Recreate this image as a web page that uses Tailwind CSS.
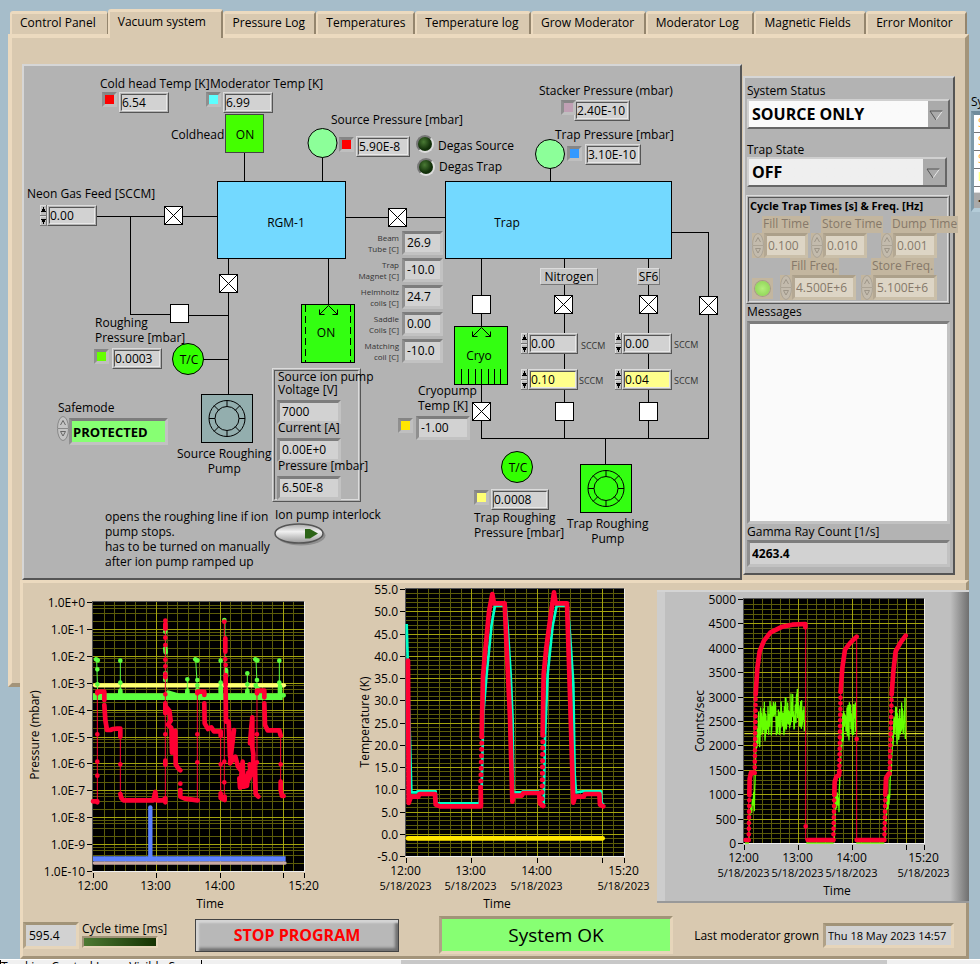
<!DOCTYPE html>
<html lang="en">
<head>
    <meta charset="UTF-8">
    <meta name="viewport" content="width=device-width, initial-scale=1.0">
    <title>Vacuum system</title>
    <script src="https://cdn.jsdelivr.net/npm/@tailwindcss/browser@4"></script>
</head>
<body class="bg-[#a6bdca] font-['Open_Sans','Noto_Sans',sans-serif] text-xs leading-[15px] text-black overflow-x-hidden">
    <div class="flex">
        <main class="flex-1 min-w-0 pl-2 pt-[9px]">
            <!-- Tabs -->
            <nav class="grid grid-cols-[98fr_115fr_94fr_99fr_116fr_115fr_109fr_112fr_101fr] items-end h-[25px] px-[2px]">
                <button class="h-[23px] pl-2 pb-[3px] text-left whitespace-nowrap rounded-t-[3px] border-t-[3px] border-l-2 border-r border-t-[#ecdabf] border-l-[#ecdabf] border-r-[#94856d] bg-[#d9c9b0]">Control Panel</button>
                <button class="relative h-[29px] -mb-[4px] pl-2 pb-[8px] text-left whitespace-nowrap rounded-t-[3px] border-t-[3px] border-l-2 border-r-2 border-t-[#ecdabf] border-l-[#ecdabf] border-r-[#94856d] bg-[#d9c9b0]">Vacuum system</button>
                <button class="h-[23px] pl-2 pb-[3px] text-left whitespace-nowrap rounded-t-[3px] border-t-[3px] border-l-2 border-r-2 border-t-[#ecdabf] border-l-[#ecdabf] border-r-[#94856d] bg-[#d9c9b0]">Pressure Log</button>
                <button class="h-[23px] pl-2 pb-[3px] text-left whitespace-nowrap rounded-t-[3px] border-t-[3px] border-l-2 border-r-2 border-t-[#ecdabf] border-l-[#ecdabf] border-r-[#94856d] bg-[#d9c9b0]">Temperatures</button>
                <button class="h-[23px] pl-2 pb-[3px] text-left whitespace-nowrap rounded-t-[3px] border-t-[3px] border-l-2 border-r-2 border-t-[#ecdabf] border-l-[#ecdabf] border-r-[#94856d] bg-[#d9c9b0]">Temperature log</button>
                <button class="h-[23px] pl-2 pb-[3px] text-left whitespace-nowrap rounded-t-[3px] border-t-[3px] border-l-2 border-r-2 border-t-[#ecdabf] border-l-[#ecdabf] border-r-[#94856d] bg-[#d9c9b0]">Grow Moderator</button>
                <button class="h-[23px] pl-2 pb-[3px] text-left whitespace-nowrap rounded-t-[3px] border-t-[3px] border-l-2 border-r-2 border-t-[#ecdabf] border-l-[#ecdabf] border-r-[#94856d] bg-[#d9c9b0]">Moderator Log</button>
                <button class="h-[23px] pl-2 pb-[3px] text-left whitespace-nowrap rounded-t-[3px] border-t-[3px] border-l-2 border-r-2 border-t-[#ecdabf] border-l-[#ecdabf] border-r-[#94856d] bg-[#d9c9b0]">Magnetic Fields</button>
                <button class="h-[23px] pl-2 pb-[3px] text-left whitespace-nowrap rounded-t-[3px] border-t-[3px] border-l-2 border-r-2 border-t-[#ecdabf] border-l-[#ecdabf] border-r-[#94856d] bg-[#d9c9b0]">Error Monitor</button>
            </nav>

            <!-- Tab page -->
            <section class="flex items-start border-4 border-t-[#ecdabf] border-l-[#ecdabf] border-r-[#a3947a] border-b-[#a3947a] bg-[#d9c9b0] pt-[26px] pl-[10px] pr-[10px] pb-[103px]">
                <!-- Synoptic diagram -->
                <div id="diagram" class="relative shrink-0 w-[720px] h-[516px] border-2 border-t-[#d6d6d6] border-l-[#d6d6d6] border-r-[#555] border-b-[#555] bg-[#b3b3b3]">
                    <svg class="absolute inset-0 text-xs" width="716" height="512" viewBox="24 66 716 512" fill="none" stroke="#000" stroke-width="1" shape-rendering="crispEdges">
                        <defs>
                            <g id="valve"><rect x="-9" y="-9" width="18" height="18" fill="#fff"/></g>
                            <g id="valveX"><rect x="-9" y="-9" width="18" height="18" fill="#fff"/><path d="M-9-9 9 9M9-9-9 9" shape-rendering="auto"/></g>
                            <g id="rotor" shape-rendering="auto"><circle r="18"/><circle r="12"/><path d="M0-18v6M0 12v6M-18 0h6M12 0h6M-13-13l5 5M13-13l-5 5M-13 13l5-5M13 13l-5-5"/></g>
                            <g id="inlet" shape-rendering="auto"><path d="M0 0-9 9M0 0 9 9M-9 4v5h5M9 4v5h-5"/></g>
                        </defs>
                        <!-- pipes -->
                        <path d="M244.5 153v28M322.5 157v24M97 216.5h120M130.5 216v98.5H170M189 315.5h39M228.5 259v135M203 359.5h25M328.5 259v45M346 217.5h99M550.5 168v14M481.5 258v180M564.5 258v180M648.5 258v180M672 232.5h36.5v206H481M605.5 438v26"/>
                        <!-- chambers -->
                        <rect x="217.5" y="181.5" width="128" height="77" fill="#73d9ff"/>
                        <rect x="445.5" y="181.5" width="226" height="77" fill="#73d9ff"/>
                        <rect x="225.5" y="114.5" width="38" height="38" fill="#4f0" stroke="#444"/>
                        <circle cx="322.5" cy="143" r="14.5" fill="#8cff99" shape-rendering="auto"/>
                        <circle cx="550" cy="154" r="14.5" fill="#8cff99" shape-rendering="auto"/>
                        <circle cx="188" cy="359" r="15.5" fill="#3f0" shape-rendering="auto"/>
                        <circle cx="517" cy="467" r="15.5" fill="#3f0" shape-rendering="auto"/>
                        <!-- valves -->
                        <use href="#valveX" x="173.5" y="215.5"/>
                        <use href="#valve" x="179.5" y="313.5"/>
                        <use href="#valveX" x="228.5" y="283.5"/>
                        <use href="#valveX" x="397.5" y="217.5"/>
                        <use href="#valve" x="481.5" y="304.5"/>
                        <use href="#valveX" x="563.5" y="304.5"/>
                        <use href="#valveX" x="648.5" y="304.5"/>
                        <use href="#valveX" x="708.5" y="305.5"/>
                        <use href="#valve" x="564.5" y="411.5"/>
                        <use href="#valve" x="648.5" y="411.5"/>
                        <!-- pumps -->
                        <rect x="201.5" y="394.5" width="51" height="48" fill="#93aeae"/>
                        <use href="#rotor" x="227" y="418.5"/>
                        <rect x="580.5" y="464.5" width="51" height="48" fill="#3f1"/>
                        <use href="#rotor" x="606" y="488.5"/>
                        <rect x="301.5" y="304.5" width="53" height="58" fill="#3f1"/>
                        <path d="M305.5 305v57M350.5 305v57" stroke-dasharray="7 4"/>
                        <use href="#inlet" x="328.5" y="305.5"/>
                        <rect x="454.5" y="326.5" width="53" height="58" fill="#3f1"/>
                        <use href="#inlet" x="481.5" y="327.5"/>
                        <path d="M461.5 369v15M468.5 369v15M475.5 369v15M481.5 369v15M488.5 369v15M494.5 369v15M500.5 369v15"/>
                        <use href="#valveX" x="481.5" y="411.5"/>
                        <g fill="#000" stroke="none" text-anchor="middle">
                            <text x="245" y="139">ON</text>
                            <text x="286" y="227">RGM-1</text>
                            <text x="507" y="227">Trap</text>
                            <text x="326" y="337">ON</text>
                            <text x="479" y="360">Cryo</text>
                            <text x="189" y="364">T/C</text>
                            <text x="518" y="472">T/C</text>
                        </g>
                    </svg>
                    <!-- ion pump cluster frame -->
                    <div class="absolute left-[248px] top-[302px] w-[89px] h-[134px] border border-t-[#dcdcdc] border-l-[#dcdcdc] border-r-[#555] border-b-[#555] p-px">
                        <div class="h-full border border-t-[#555] border-l-[#555] border-r-[#dcdcdc] border-b-[#dcdcdc]"></div>
                    </div>
                    <!-- ion pump interlock switch -->
                    <button id="interlock" class="absolute left-[250px] top-[457px] w-[52px] h-[23px]">
                        <svg width="52" height="23" viewBox="0 0 52 23">
                            <defs><linearGradient id="sw" x1="0" y1="0" x2="0" y2="1"><stop offset="0" stop-color="#aaa"/><stop offset=".4" stop-color="#f0f0f0"/><stop offset="1" stop-color="#999"/></linearGradient></defs>
                            <ellipse cx="27" cy="12.5" rx="24.5" ry="10" fill="#777" opacity=".6"/>
                            <ellipse cx="25" cy="10.5" rx="24" ry="9.5" fill="url(#sw)" stroke="#555" stroke-width="1.5"/>
                            <path d="M31 6h5l8 4.5-8 5h-5z" fill="#2c6417"/>
                        </svg>
                    </button>
                    <!-- safemode -->
                    <label for="safemode" class="absolute left-[34px] top-[334px]">Safemode</label>
                    <svg class="absolute left-[33px] top-[350px]" width="12" height="25" viewBox="0 0 12 25"><use href="#oval"/></svg>
                    <input id="safemode" readonly value="PROTECTED" class="absolute left-[45px] top-[352px] w-[99px] h-[27px] pl-px border-[3px] border-t-[#7d7d7d] border-l-[#8f8f8f] border-r-[#c2c2c2] border-b-[#c2c2c2] bg-[#87ff73] text-[13px] font-bold outline-none">
                </div>

                <!-- Status column -->
                <div class="flex-1 min-w-0 mt-3 ml-px h-[499px] border-2 border-t-[#d6d6d6] border-l-[#d6d6d6] border-r-[#555] border-b-[#555] bg-[#b3b3b3] pl-[2px] pr-[3px] pt-[5px]">
                    <label for="status" class="block">System Status</label>
                    <div class="relative mt-px h-[30px] border-2 border-t-[#d0d0d0] border-l-[#d0d0d0] border-r-[#666] border-b-[#666] bg-[#aaa]">
                        <select id="status" class="appearance-none absolute inset-0 w-full pl-[3px] bg-linear-to-r from-[#fafafa] from-90% to-transparent to-90% text-base font-bold outline-none"><option>SOURCE ONLY</option><option>OFF</option></select>
                        <svg class="absolute right-[5px] top-[9px] pointer-events-none" width="14" height="11" viewBox="0 0 14 11"><path d="M13.5 1 7 10" stroke="#e8e8e8" fill="none"/><path d="M13.5 1H1l6 9" stroke="#555" fill="none"/></svg>
                    </div>
                    <label for="trapState" class="block mt-[13px]">Trap State</label>
                    <div class="relative mr-[3px] h-[30px] border-2 border-t-[#d0d0d0] border-l-[#d0d0d0] border-r-[#666] border-b-[#666] bg-[#aaa]">
                        <select id="trapState" class="appearance-none absolute inset-0 w-full pl-[3px] bg-linear-to-r from-[#efefef] from-89% to-transparent to-89% text-base font-bold outline-none"><option>OFF</option><option>ON</option></select>
                        <svg class="absolute right-[5px] top-[9px] pointer-events-none" width="14" height="11" viewBox="0 0 14 11"><path d="M13.5 1 7 10" stroke="#e8e8e8" fill="none"/><path d="M13.5 1H1l6 9" stroke="#555" fill="none"/></svg>
                    </div>
                    <!-- Cycle trap times, disabled -->
                    <fieldset class="mt-[8px] -ml-px h-[109px] border border-t-[#dcdcdc] border-l-[#dcdcdc] border-r-[#555] border-b-[#555] p-px">
                        <div class="h-full border border-t-[#555] border-l-[#555] border-r-[#dcdcdc] border-b-[#dcdcdc]">
                            <div class="pl-px text-[11px] font-bold whitespace-nowrap">Cycle Trap Times [s] &amp; Freq. [Hz]</div>
                            <div id="cycleTimes" class="flex pl-[3px] mt-[3px]"></div>
                            <div class="flex items-end pl-[3px]">
                                <div class="w-[21px] h-[21px] mr-[7px] mb-px bg-[#c3b69f] p-[3px]"><div class="size-[15px] rounded-full bg-radial from-[#b4ee7c] to-[#86d04e] ring-1 ring-[#a89c86]"></div></div>
                                <div id="cycleFreqs" class="flex"></div>
                            </div>
                        </div>
                    </fieldset>
                    <label for="messages" class="block">Messages</label>
                    <textarea id="messages" readonly class="block mt-[2px] w-full h-[203px] resize-none border-[3px] border-t-[#7d7d7d] border-l-[#8f8f8f] border-r-[#c2c2c2] border-b-[#c2c2c2] bg-[#fafafa] outline-none"></textarea>
                    <label for="gamma" class="block">Gamma Ray Count [1/s]</label>
                    <input id="gamma" readonly value="4263.4" class="block mt-px w-full h-[27px] pl-[2px] pb-px border-[3px] border-t-[#7d7d7d] border-l-[#8f8f8f] border-r-[#c2c2c2] border-b-[#c2c2c2] bg-[#d2d2d2] font-bold outline-none">
                </div>
            </section>

            <!-- Trends and program control -->
            <section class="relative ml-3 -mt-[107px] h-[379px] border-[3px] border-t-[#ecdabf] border-l-[#ecdabf] border-r-[#a3947a] border-b-[#a3947a] bg-[#d9c9b0]">
                <div class="flex items-start">
                    <svg id="pressureChart" class="shrink-0" width="300" height="330" viewBox="23 3 300 330">
                        <g id="pressureGrid"></g>
                        <g transform="scale(.33333)" fill="none" stroke-linecap="round" stroke-linejoin="round">
                            <path stroke="#c9a9a3" stroke-width="10" d="M283 849H855"/>
                            <path stroke="#5c82ff" stroke-width="15" stroke-linecap="butt" d="M279 836H857M496 832v4M592 832v4M657 832v4M720 832v4M849 832v4"/>
                            <path stroke="#5c82ff" stroke-width="13" d="M451 834V682"/>
                            <path stroke="#ffff73" stroke-width="13" d="M285 316H852"/>
                            <path stroke="#5cff40" stroke-width="20" stroke-linecap="butt" d="M279 350H848"/>
                            <path stroke="#5cff40" stroke-width="14" d="M361 332v10M505 338l25 8M562 332v8M592 330v8M662 322v16M742 332v8M772 325v10M840 320v20M850 346h1"/>
                            <path stroke="#5cff40" stroke-width="3" d="M290 238l3 100M361 242V340M497 120V340M562 298V340M587 238l6 102M662 242V340M675 120V340M742 280V340M768 238l4 100M838 242V340"/>
                            <path stroke="#5cff40" stroke-width="14" d="M288 238l5 3M292 268h0M292 313h0M361 242h0M361 308h0M496 155h0M496 205l1 12M496 280v20M562 298h0M586 238l6 3M592 300h0M592 316h0M662 242h0M662 308h0M673 120h0M678 270v20M742 280h0M742 313h0M766 238l6 3M771 300h0M767 316h0M838 242h0M838 308h0"/>
                            <path stroke="#f03" stroke-width="3" d="M292 665V337M361 455V650M496 660V120M592 660V337M662 455V650M673 657V125M771 650V332M842 455V650"/>
                            <path stroke="#f03" stroke-width="14" d="M279 664h13v3M292 340v-5h21v25M292 463h0M292 545h0M292 587h0M313 375l3 45 5 30h10l8-3 12-1h10v24M361 553h0M361 642l3 12 6 7H460l6-25 3 25h20l7-6v12"/>
                            <path stroke="#f03" stroke-width="14" d="M496 122h0M496 132v14M496 173h0M496 195h0M496 239h0M496 259h0M496 282v10M496 343h0M496 370v30M496 463h0M496 542v12M498 380l10 12 4 30-8 12 10 10 2 74 6-20-4-40 8-5 1 100 8 12 6 6M541 611h0M541 630v20l14 6 38 5"/>
                            <path stroke="#f03" stroke-width="14" d="M592 463h0M592 547h0M592 340v-5h21v10M613 370l1 60 10 17 10-5 8 12h20v14M662 553h0M662 640v14l12 6v-10M673 607h0M673 545h0M673 125h0M676 175v40M676 238h0M677 255h0M677 285v30M677 325l1 100 8 0 4 105 12-80-12 100 16-20 8 30 8 10M718 595l2 28 8-78 3 75 10-3 4-40-6 36 14-30-4-30 8 8M750 490l4-50 3-28v90l3 20-1 60 4-30 4 90 8 8M771 547h0M771 463h0M771 340v-8h22v20M793 370l2 65 8 16h35l4 16M842 553h0M842 605v25l4 18h5"/>
                        </g>
                    </svg>
                    <svg id="tempChart" class="shrink-0 ml-[27px]" width="305" height="330" viewBox="10 9 305 330">
                        <g id="tempGrid"></g>
                        <g transform="scale(.33333)" fill="none" stroke-linejoin="round">
                            <path stroke="#ffe600" stroke-width="14" stroke-linecap="round" d="M204 793H788"/>
                            <path stroke="#00ffc8" stroke-width="8" d="M200 150l10 350 4 155h15l4-3h54l2 36H418l7-48 5-220 10-120 15-150 10-55h32l6 65 9 140 6 140 2 215h25l3-3h47l4 38h12l4-200 8-190 15-145 12-60h33l7 85 10 150 4 270 4 55 20-3h55l2 34 6 6"/>
                            <path stroke="#f03" stroke-width="14" stroke-linecap="round" d="M204 260l2 427 7-19h22l3-8h47l2 32 13 5H423l-1-57M425 488l4-180 6-70 12-125 10-53 5 28h32l5 112 11 230 7 253 4-18h24l5-8h47l3 32 10 7M608 480l3-180 8-80 15-110 8-55 5 33h34l7 212 8 260 4 126 5-18h26l4-8h43l2 32 10 5"/>
                            <path stroke="#f03" stroke-width="15" stroke-linecap="round" stroke-dasharray="0 19" d="M422 640L426 480M606 693L609 470"/>
                        </g>
                    </svg>
                    <!-- count rate -->
                    <div class="w-[312px] shrink-0 ml-auto -mr-[3px] mt-[7px] h-[313px] border-t-2 border-t-[#d4d4d4] border-b-2 border-b-[#999] bg-[#bfbfbf]">
                        <div class="h-full bg-linear-to-r from-transparent from-94% to-[#6f6f6f]">
                            <div class="h-full border-l-8 border-l-[#cdcdcd]">
                                <svg id="countChart" width="300" height="309" viewBox="26 84 300 309">
                                    <g id="countGrid"></g>
                                    <g transform="scale(.33333)" fill="none" stroke-linejoin="round">
                                        <path stroke="#6f0" stroke-width="4" d="M318 1005h12M502 1005h82M652 1005h84"/>
                                        <path stroke="#ff3" stroke-width="3" d="M316 677H855"/>
                                        <path id="gammaNoise" stroke="#6f0" stroke-width="4"/>
                                        <path stroke="#f03" stroke-width="3" d="M329 996V870M347 795V560M500 355V996M584 996v-130M601 795l4-240M653 390V996M736 996V860M752 795l6-235"/>
                                        <path stroke="#f03" stroke-width="14" stroke-linecap="round" d="M320 996h8M331 862l1-50 4-18h10M350 560l5-80 7-50 13-32 20-25 35-17 30-6 39-2v10M500 955h0M506 996h77M586 860l1-38 5-16 8-4 1-14M605 550l5-70 8-55 17-22 18-17M653 693h0M653 996h82M739 855l2-45 8-13M758 560l5-70 7-60 15-27 15-20"/>
                                        <path stroke="#f03" stroke-width="14" stroke-linecap="round" stroke-dasharray="0 17" d="M329 996l2-130M347 795l3-235M583 996l3-136M601 790l4-240M736 996l3-140M752 797l6-235"/>
                                    </g>
                                </svg>
                            </div>
                        </div>
                    </div>
                </div>

                <div class="flex items-center h-[38px] mt-[3px] pr-[12px]">
                    <input aria-label="Cycle time" readonly value="595.4" class="w-[56px] h-[27px] pl-[3px] border-[3px] border-t-[#a19378] border-l-[#b0a187] border-r-[#e6d5ba] border-b-[#e6d5ba] bg-[#d2d2d2] outline-none">
                    <div class="ml-[3px] w-[83px]">
                        <span class="whitespace-nowrap">Cycle time [ms]</span>
                        <div class="w-[76px] h-[12px] mb-px border-2 border-t-[#a19378] border-l-[#a19378] border-r-[#e6d5ba] border-b-[#e6d5ba] bg-linear-to-r from-[#4d7a33] to-[#153303]"></div>
                    </div>
                    <button class="ml-[30px] w-[204px] h-[33px] border border-[#444] bg-[#b8b8b8] shadow-[inset_3px_3px_2px_#d4d4d4,inset_-3px_-3px_3px_#707070] text-base font-bold text-[#f00]">STOP PROGRAM</button>
                    <div class="ml-[40px] w-[234px] h-[38px] flex items-center justify-center border-[3px] border-t-[#a19378] border-l-[#b0a187] border-r-[#e6d5ba] border-b-[#e6d5ba] bg-[#87ff73] text-[19px]">System OK</div>
                    <label for="lastGrown" class="ml-auto whitespace-nowrap">Last moderator grown</label>
                    <input id="lastGrown" readonly value="Thu 18 May 2023 14:57" class="ml-[4px] w-[131px] h-[25px] pl-[2px] border-[3px] border-t-[#a19378] border-l-[#b0a187] border-r-[#e6d5ba] border-b-[#e6d5ba] bg-[#d2d2d2] text-[11px] outline-none">
                </div>
            </section>
        </main>

        <!-- Neighbouring table, mostly scrolled out of view -->
        <aside class="w-[11px] shrink-0 overflow-hidden pt-[94px] pl-[2px]">
            <div class="whitespace-nowrap">Sys</div>
            <div class="mt-[2px] h-[101px] w-10 border-t-4 border-l-[3px] border-b-4 border-t-[#6f8b9b] border-l-[#7f9aa9] border-b-[#b4ccd8] bg-white">
                <div class="h-[18px] border-b border-[#777] text-[#ffa940] pl-1">S</div>
                <div class="h-[18px] border-b border-[#777] text-[#ffa940] pl-1">S</div>
                <div class="h-[18px] border-b border-[#777] text-[#ffa940] pl-1">S</div>
                <div class="h-[18px] border-b border-[#777] text-[#ffff66] pl-1">L</div>
                <div class="h-[5px]"></div>
                <div class="h-[16px] bg-[#aaa] border-t border-[#ddd] pl-1 leading-[14px]">◂</div>
            </div>
        </aside>
    </div>

    <!-- Window bottom edge -->
    <footer class="flex h-[5px] overflow-hidden border-t border-white bg-[#f0f0f0]">
        <div class="w-[202px] h-[20px] -mt-px border border-black bg-[#f0f0f0] leading-[14px] whitespace-nowrap overflow-hidden">Tracking Control Laser Visible Scan</div>
        <div class="flex-1"></div>
        <div class="w-[486px] bg-[#c8c8c8]"></div>
        <div class="w-[93px]"></div>
    </footer>

    <svg width="0" height="0" class="absolute">
        <g id="oval"><ellipse cx="6" cy="12.5" rx="5.5" ry="12" fill="#c4c4c4" stroke="#888"/><path d="M1 12.500h10" stroke="#888"/><path d="M3.500 9 6 4.500 8.500 9M3.500 15.500h5L6 20z" fill="none" stroke="#666"/></g>
    </svg>

    <script>
        const diagram = document.getElementById('diagram');

        // id, value, left, top, width, style
        const fields = [
            ['coldTemp', '6.54', 95, 26, 50, 'flat'],
            ['modTemp', '6.99', 199, 26, 50, 'flat'],
            ['sourceP', '5.90E-8', 332, 70, 54, 'flat'],
            ['stackerP', '2.40E-10', 550, 34, 56, 'flat'],
            ['trapP', '3.10E-10', 561, 78, 56, 'flat'],
            ['neon', '0.00', 23, 139, 50, 'flat', true],
            ['roughP', '0.0003', 88, 282, 50, 'flat'],
            ['n2Read', '0.00', 504, 267, 50, 'flat', true],
            ['n2Set', '0.10', 504, 303, 50, 'yellow', true],
            ['sfRead', '0.00', 598, 267, 50, 'flat', true],
            ['sfSet', '0.04', 598, 303, 50, 'yellow', true],
            ['trapRoughP', '0.0008', 467, 423, 58, 'flat'],
            ['t0', '26.9', 378, 165, 41, 'deep'],
            ['t1', '-10.0', 378, 192, 41, 'deep'],
            ['t2', '24.7', 378, 219, 41, 'deep'],
            ['t3', '0.00', 378, 246, 41, 'deep'],
            ['t4', '-10.0', 378, 273, 41, 'deep'],
            ['cryoTemp', '-1.00', 392, 350, 54, 'deep'],
            ['ionV', '7000', 253, 334, 64, 'deep'],
            ['ionA', '0.00E+0', 253, 372, 64, 'deep'],
            ['ionP', '6.50E-8', 253, 410, 64, 'deep'],
        ];
        const frame = 'absolute h-[21px] border border-t-[#dcdcdc] border-l-[#dcdcdc] border-r-[#555] border-b-[#555] p-px bg-[#b3b3b3]';
        const inner = 'block w-full h-full pb-px border border-t-[#555] border-l-[#555] border-r-[#e8e8e8] border-b-[#e8e8e8] outline-none ';
        const deep = 'absolute h-[24px] pl-[2px] pb-[2px] border-[3px] border-t-[#7d7d7d] border-l-[#8f8f8f] border-r-[#c2c2c2] border-b-[#c2c2c2] bg-[#d2d2d2] outline-none';
        for (const [id, value, x, y, w, kind, spin] of fields) {
            const pos = `left:${x}px;top:${y}px;width:${w}px`;
            const html = kind === 'deep'
                ? `<input id="${id}" readonly value="${value}" class="${deep}" style="${pos}">`
                : `<div class="${frame}" style="${pos}"><input id="${id}" ${spin ? '' : 'readonly'} value="${value}" class="${inner + (kind === 'yellow' ? 'bg-[#ffff8c]' : 'bg-[#d2d2d2]')}"></div>`;
            diagram.insertAdjacentHTML('beforeend', html);
            if (spin) {
                diagram.insertAdjacentHTML('beforeend', `<svg class="absolute" style="left:${x - 7}px;top:${y}px" width="7" height="21" viewBox="0 0 7 21" shape-rendering="crispEdges">
                    <path d="M0 0h7v10H0zM0 11h7v10H0z" fill="#bdbdbd"/><path d="M.5 10V.5H6M.5 20v-9H6" stroke="#dcdcdc" fill="none"/><path d="M6.5 0v10H0M6.5 11v9.5H0" stroke="#777" fill="none"/>
                    <path d="M3.5 2 6 7H1zM3.5 19 6 14H1z" fill="#000"/></svg>`);
            }
        }

        // text, left, top, extra classes, id of the field it names
        const labels = [
            ['Cold head Temp [K]', 76, 10, '', 'coldTemp'],
            ['Moderator Temp [K]', 186, 10, '', 'modTemp'],
            ['Coldhead', 147, 61, ''],
            ['Source Pressure [mbar]', 307, 46, '', 'sourceP'],
            ['Degas Source', 414, 72, '', 'degasSource'],
            ['Degas Trap', 415, 93, '', 'degasTrap'],
            ['Stacker Pressure (mbar)', 515, 17, '', 'stackerP'],
            ['Trap Pressure [mbar]', 531, 61, '', 'trapP'],
            ['Neon Gas Feed [SCCM]', 3, 120, '', 'neon'],
            ['Roughing\nPressure [mbar]', 71, 249, '', 'roughP'],
            ['Cryopump\nTemp [K]', 394, 317, '', 'cryoTemp'],
            ['Source Roughing\nPump', 153, 380, 'text-center'],
            ['Source ion pump', 254, 303, ''],
            ['Voltage [V]', 254, 316, '', 'ionV'],
            ['Current [A]', 254, 354, '', 'ionA'],
            ['Pressure [mbar]', 254, 392, '', 'ionP'],
            ['Ion pump interlock', 251, 441, '', 'interlock'],
            ['opens the roughing line if ion\npump stops.\nhas to be turned on manually\nafter ion pump ramped up', 81, 443, ''],
            ['Trap Roughing\nPressure [mbar]', 450, 444, '', 'trapRoughP'],
            ['Trap Roughing\nPump', 543, 450, 'text-center'],
            ['SCCM', 557, 272, 'text-[9px] text-[#333]', 'n2Read'],
            ['SCCM', 555, 307, 'text-[9px] text-[#333]', 'n2Set'],
            ['SCCM', 650, 271, 'text-[9px] text-[#333]', 'sfRead'],
            ['SCCM', 650, 307, 'text-[9px] text-[#333]', 'sfSet'],
            ['Beam\nTube [C]', 325, 166, 'w-[50px] text-right text-[8px] leading-[11px] text-[#333]', 't0'],
            ['Trap\nMagnet [C]', 325, 193, 'w-[50px] text-right text-[8px] leading-[11px] text-[#333]', 't1'],
            ['Helmholtz\ncoils [C]', 325, 220, 'w-[50px] text-right text-[8px] leading-[11px] text-[#333]', 't2'],
            ['Saddle\nCoils [C]', 325, 247, 'w-[50px] text-right text-[8px] leading-[11px] text-[#333]', 't3'],
            ['Matching\ncoil [C]', 325, 274, 'w-[50px] text-right text-[8px] leading-[11px] text-[#333]', 't4'],
            ['Nitrogen', 516, 202, 'w-[58px] h-[17px] text-center border border-t-[#dcdcdc] border-l-[#dcdcdc] border-r-[#777] border-b-[#777] bg-[#c6c6c6]'],
            ['SF6', 613, 202, 'w-[23px] h-[17px] text-center border border-t-[#dcdcdc] border-l-[#dcdcdc] border-r-[#777] border-b-[#777] bg-[#c6c6c6]'],
        ];
        for (const [text, x, y, cls, id] of labels) {
            const el = document.createElement(id ? 'label' : 'div');
            if (id) el.htmlFor = id;
            el.className = 'absolute whitespace-pre ' + cls;
            el.style.left = x + 'px';
            el.style.top = y + 'px';
            el.textContent = text;
            diagram.append(el);
        }

        // plot colour keys next to the readouts
        const keys = [
            [78, 26, '#ff0000'], [182, 26, '#5cffff'], [315, 71, '#ff0000'], [537, 34, '#c0a0b4'],
            [543, 80, '#3399ff'], [70, 283, '#66ff00'], [374, 352, '#ffe600'], [450, 424, '#ffff73'],
        ];
        for (const [x, y, color] of keys) {
            diagram.insertAdjacentHTML('beforeend', `<div class="absolute size-[15px] border-[3px] border-t-[#858585] border-l-[#8f8f8f] border-r-[#bfbfbf] border-b-[#bfbfbf]" style="left:${x}px;top:${y}px;background:${color}"></div>`);
        }

        // degas leds
        for (const [id, x, y] of [['degasSource', 392, 69], ['degasTrap', 393, 92]]) {
            diagram.insertAdjacentHTML('beforeend', `<button id="${id}" class="absolute size-[18px] rounded-full border-2 border-t-[#777] border-l-[#777] border-r-[#ddd] border-b-[#ddd] bg-radial-[at_40%_35%] from-[#4a7a35] to-[#12300a] to-60%" style="left:${x}px;top:${y}px"></button>`);
        }

        // disabled cycle controls
        function dimField(id, label, value, cls) {
            return `<div class="${cls}">
                <label for="${id}" class="block w-max ml-[10px] px-px h-[17px] bg-[#c3b69f] text-[#86796a] whitespace-nowrap">${label}</label>
                <div class="flex bg-[#c3b69f]">
                    <svg class="shrink-0 opacity-40" width="12" height="25" viewBox="0 0 12 25"><use href="#oval"/></svg>
                    <input id="${id}" disabled value="${value}" class="min-w-0 flex-1 h-[25px] pl-px pb-px border-[3px] border-t-[#aca08a] border-l-[#b4a893] border-r-[#cabfa9] border-b-[#cabfa9] bg-[#ddd5c5] text-[#86796a]">
                </div></div>`;
        }
        document.getElementById('cycleTimes').innerHTML =
            dimField('fill', 'Fill Time', '0.100', 'w-[56px] mr-[3px]') +
            dimField('store', 'Store Time', '0.010', 'w-[56px] mr-[14px]') +
            dimField('dump', 'Dump Time', '0.001', 'w-[56px]');
        document.getElementById('cycleFreqs').innerHTML =
            dimField('fillF', 'Fill Freq.', '4.500E+6', 'w-[76px] mr-[5px]') +
            dimField('storeF', 'Store Freq.', '5.100E+6', 'w-[76px]');

        // Grid, ticks and axis text of one chart
        function axes(id, o) {
            let s = `<rect x="${o.x}" y="${o.y}" width="${o.w}" height="${o.h}" fill="#000"/>`;
            const v = (x, c) => `<path d="M${x} ${o.y}v${o.h}" stroke="${c}"/>`;
            const h = (y, c) => `<path d="M${o.x} ${y}h${o.w}" stroke="${c}"/>`;
            const at = n => Math.round(n) + 0.5;
            for (let m = 10; m < 200; m += 10) if (m % 60) s += v(at(o.x + o.w * m / 200), '#5c5c0a');
            o.rows.forEach((t, i) => {
                const y = o.y + i * o.h / (o.rows.length - 1);
                if (i < o.rows.length - 1) for (const f of o.minor) s += h(at(y + f * o.h / (o.rows.length - 1)), '#5c5c0a');
            });
            for (const m of [60, 120, 180]) s += v(at(o.x + o.w * m / 200), '#a3a30f');
            o.rows.forEach((t, i) => {
                const y = at(o.y + i * o.h / (o.rows.length - 1));
                if (i && i < o.rows.length - 1) s += h(y, '#a3a30f');
                s += `<path d="M${o.x - 6} ${y}h5" stroke="#000"/><text x="${o.x - 8}" y="${y + 4}" text-anchor="end">${t}</text>`;
            });
            [[0, '12:00'], [60, '13:00'], [120, '14:00'], [180, ''], [200, '15:20']].forEach(([m, t]) => {
                const x = at(o.x + o.w * m / 200);
                const tx = x - 1;
                const b = o.y + o.h;
                s += `<path d="M${x} ${b + 2}v5" stroke="#000"/><text x="${tx}" y="${b + 19}" text-anchor="middle">${t}</text>`;
                if (o.date && t) s += `<text class="text-[11px]" x="${tx}" y="${b + 34}" text-anchor="middle">5/18/2023</text>`;
            });
            s += `<path d="M${o.x - .5} ${o.y + o.h}V${o.y - .5}h${o.w}" fill="none" stroke="#555"/><path d="M${o.x} ${o.y + o.h + .5}h${o.w + .5}V${o.y}" fill="none" stroke="#eee"/>`;
            s += `<text x="${o.tx}" y="${o.ty}" text-anchor="middle">Time</text>`;
            s += `<text transform="translate(${o.lx} ${o.ly}) rotate(-90)" text-anchor="middle">${o.label}</text>`;
            document.getElementById(id).innerHTML = `<g shape-rendering="crispEdges">${s}</g>`;
        }
        const fifths = [.2, .4, .6, .8];
        axes('pressureGrid', {
            x: 93, y: 22, w: 211, h: 269, tx: 210, ty: 328, lx: 39, ly: 155, label: 'Pressure (mbar)', minor: [.1, .22, .4, .7],
            rows: ['1.0E+0', '1.0E-1', '1.0E-2', '1.0E-3', '1.0E-4', '1.0E-5', '1.0E-6', '1.0E-7', '1.0E-8', '1.0E-9', '1.0E-10'],
        });
        axes('tempGrid', {
            x: 66, y: 15, w: 218, h: 267, tx: 157, ty: 334, lx: 29, ly: 148, label: 'Temperature (K)', minor: fifths, date: true,
            rows: ['55.0', '50.0', '45.0', '40.0', '35.0', '30.0', '25.0', '20.0', '15.0', '10.0', '5.0', '0.0', '-5.0'],
        });
        axes('countGrid', {
            x: 105, y: 91, w: 180, h: 244, tx: 198, ty: 387, lx: 65, ly: 213, label: 'Counts/sec', minor: fifths, date: true,
            rows: ['5000', '4500', '4000', '3500', '3000', '2500', '2000', '1500', '1000', '500', '0'],
        });

        // Raw detector counts scatter around the mean
        let seed = 7;
        const rand = () => (seed = (seed * 16807) % 2147483647) / 2147483647 - 0.5;
        const runs = [
            [[330, 990], [334, 890], [346, 880], [352, 700], [362, 660], [380, 635], [440, 615], [484, 610], [498, 625]],
            [[586, 990], [590, 880], [600, 870], [606, 700], [614, 640], [652, 625]],
            [[738, 990], [744, 870], [752, 860], [760, 720], [768, 655], [800, 630]],
        ];
        let d = '';
        for (const run of runs) {
            d += `M${run[0]}`;
            for (let i = 1; i < run.length; i++) {
                const [x0, y0] = run[i - 1], [x1, y1] = run[i];
                for (let x = x0; x < x1; x += 1) {
                    const y = y0 + (y1 - y0) * (x - x0) / (x1 - x0);
                    d += `L${x} ${Math.round(y + (rand() + rand() * rand()) * (y < 690 ? 105 : 60))}`;
                }
            }
        }
        document.getElementById('gammaNoise').setAttribute('d', d);
    </script>
</body>
</html>
